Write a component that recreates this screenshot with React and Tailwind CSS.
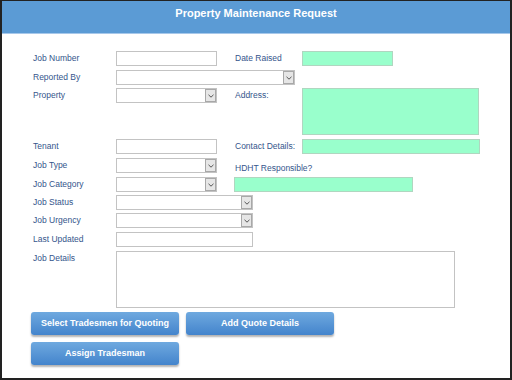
import React from 'react'

// Access-style form: label column, then fields at fixed widths
const LABEL = 'w-[83px] shrink-0 h-[15px] flex items-center text-[8.5px] text-[#34558c]'
const RLABEL = 'w-[67px] shrink-0 h-[15px] flex items-center text-[8.5px] text-[#34558c]'

function TextBox({ w, h = 'h-[15px]' }) {
    return <div className={`${w} ${h} shrink-0 bg-white border border-[#c3c3c3]`} />
}

function GreenBox({ w, h = 'h-[15px]' }) {
    return <div className={`${w} ${h} shrink-0 bg-[#99ffcc] border border-[#b0d6c0]`} />
}

function Combo({ w }) {
    return (
        <div className={`${w} h-[15px] shrink-0 bg-white border border-[#c3c3c3] flex justify-end`}>
            <div className="w-[11px] h-full bg-[#e6e6e6] border border-[#a8a8a8] flex items-center justify-center">
                <svg width="6" height="4" viewBox="0 0 6 4">
                    <path d="M0.5 0.8 L3 3.2 L5.5 0.8" fill="none" stroke="#555" strokeWidth="1" />
                </svg>
            </div>
        </div>
    )
}

function Button({ children }) {
    return (
        <button className="w-[148px] h-[23px] rounded-[3px] bg-gradient-to-b from-[#6fa9df] to-[#4384cc] text-white font-bold text-[9px] shadow-[0_2px_2px_rgba(0,0,0,0.3)]">
            {children}
        </button>
    )
}

export default function App() {
    return (
        <div
            className="w-[512px] h-[380px] bg-white border-l-2 border-r-2 border-b-2 border-t border-[#222] flex flex-col overflow-hidden"
            style={{ fontFamily: '"Liberation Sans", Arial, sans-serif' }}
        >
            {/* Header */}
            <div className="h-[32px] shrink-0 bg-[#5b9bd5] flex justify-center pt-[4px]">
                <span className="text-white font-bold text-[11px]">Property Maintenance Request</span>
            </div>
            <div className="h-[1px] shrink-0 bg-[#a7c8ea]" />

            {/* Form */}
            <div className="flex flex-col pl-[31px] pt-[17px]">
                <div className="flex h-[19px] items-start">
                    <div className={LABEL}>Job Number</div>
                    <TextBox w="w-[101px]" />
                    <div className={`${RLABEL} ml-[18px]`}>Date Raised</div>
                    <GreenBox w="w-[91px]" />
                </div>
                <div className="flex h-[18px] items-start">
                    <div className={LABEL}>Reported By</div>
                    <Combo w="w-[179px]" />
                </div>
                <div className="flex h-[51px] items-start">
                    <div className={LABEL}>Property</div>
                    <Combo w="w-[101px]" />
                    <div className={`${RLABEL} ml-[18px]`}>Address:</div>
                    <GreenBox w="w-[177px]" h="h-[47px]" />
                </div>
                <div className="flex h-[19px] items-start">
                    <div className={LABEL}>Tenant</div>
                    <TextBox w="w-[101px]" />
                    <div className={`${RLABEL} ml-[18px]`}>Contact Details:</div>
                    <GreenBox w="w-[178px]" />
                </div>
                <div className="flex h-[19px] items-start">
                    <div className={LABEL}>Job Type</div>
                    <Combo w="w-[101px]" />
                    <div className="ml-[18px] mt-[3px] h-[15px] flex items-center text-[8.5px] text-[#34558c]">HDHT Responsible?</div>
                </div>
                <div className="flex h-[18px] items-start">
                    <div className={LABEL}>Job Category</div>
                    <Combo w="w-[101px]" />
                    <div className="ml-[17px]">
                        <GreenBox w="w-[179px]" />
                    </div>
                </div>
                <div className="flex h-[18px] items-start">
                    <div className={LABEL}>Job Status</div>
                    <Combo w="w-[137px]" />
                </div>
                <div className="flex h-[19px] items-start">
                    <div className={LABEL}>Job Urgency</div>
                    <Combo w="w-[137px]" />
                </div>
                <div className="flex h-[19px] items-start">
                    <div className={LABEL}>Last Updated</div>
                    <TextBox w="w-[137px]" />
                </div>
                <div className="flex h-[61px] items-start">
                    <div className={`${LABEL} !items-start pt-[1px]`}>Job Details</div>
                    <TextBox w="w-[339px]" h="h-[57px]" />
                </div>

                {/* Buttons */}
                <div className="flex flex-col gap-[7px] -ml-[2px]">
                    <div className="flex gap-[7px]">
                        <Button>Select Tradesmen for Quoting</Button>
                        <Button>Add Quote Details</Button>
                    </div>
                    <div className="flex">
                        <Button>Assign Tradesman</Button>
                    </div>
                </div>
            </div>
        </div>
    )
}
